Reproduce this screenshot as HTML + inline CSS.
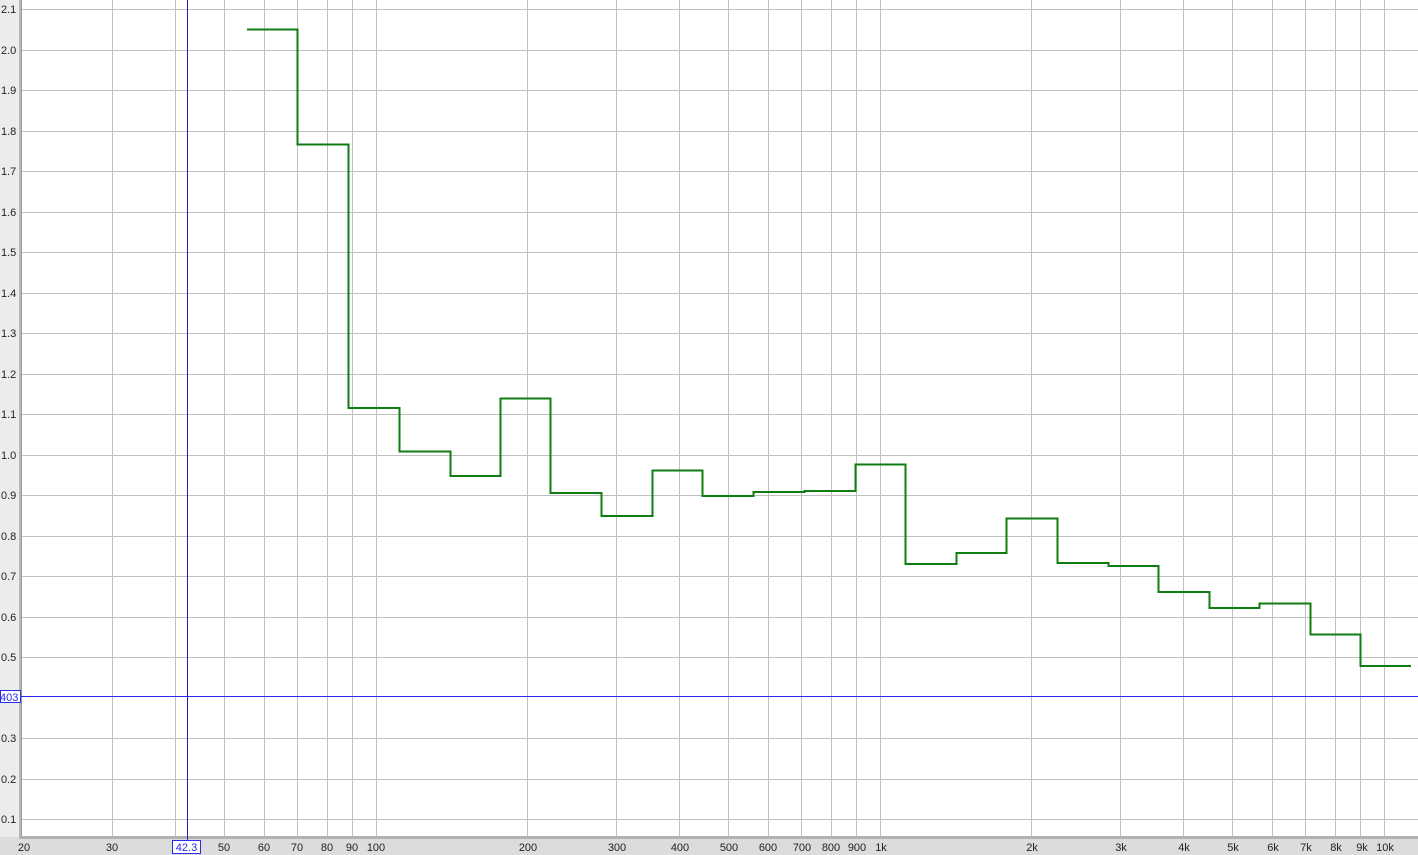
<!DOCTYPE html>
<html><head><style>
html,body{margin:0;padding:0;width:1418px;height:855px;overflow:hidden;background:#fff;font-family:"Liberation Sans",sans-serif;}
svg{display:block}
</style></head><body>
<svg width="1418" height="855" xmlns="http://www.w3.org/2000/svg" font-family="Liberation Sans, sans-serif" font-size="11">
<rect x="0" y="0" width="1418" height="855" fill="#fff"/>
<!-- left panel -->
<rect x="0" y="0" width="21" height="855" fill="#ececec"/>
<rect x="19" y="0" width="3" height="838" fill="#b8b8b8"/>
<rect x="21" y="0" width="1" height="838" fill="#999"/>
<!-- bottom panel -->
<rect x="0" y="837" width="1418" height="18" fill="#dcdcdc"/>
<rect x="19" y="836" width="1399" height="3" fill="#b0b0b0"/>
<g stroke="#c0c0c0" stroke-width="1">
<line x1="22" x2="1418" y1="9.5" y2="9.5"/><line x1="22" x2="1418" y1="50.5" y2="50.5"/><line x1="22" x2="1418" y1="90.5" y2="90.5"/><line x1="22" x2="1418" y1="131.5" y2="131.5"/><line x1="22" x2="1418" y1="171.5" y2="171.5"/><line x1="22" x2="1418" y1="212.5" y2="212.5"/><line x1="22" x2="1418" y1="252.5" y2="252.5"/><line x1="22" x2="1418" y1="293.5" y2="293.5"/><line x1="22" x2="1418" y1="333.5" y2="333.5"/><line x1="22" x2="1418" y1="374.5" y2="374.5"/><line x1="22" x2="1418" y1="414.5" y2="414.5"/><line x1="22" x2="1418" y1="455.5" y2="455.5"/><line x1="22" x2="1418" y1="495.5" y2="495.5"/><line x1="22" x2="1418" y1="536.5" y2="536.5"/><line x1="22" x2="1418" y1="576.5" y2="576.5"/><line x1="22" x2="1418" y1="617.5" y2="617.5"/><line x1="22" x2="1418" y1="657.5" y2="657.5"/><line x1="22" x2="1418" y1="738.5" y2="738.5"/><line x1="22" x2="1418" y1="779.5" y2="779.5"/><line x1="22" x2="1418" y1="819.5" y2="819.5"/>
<line y1="0" y2="836" x1="112.5" x2="112.5"/><line y1="0" y2="836" x1="175.5" x2="175.5"/><line y1="0" y2="836" x1="224.5" x2="224.5"/><line y1="0" y2="836" x1="264.5" x2="264.5"/><line y1="0" y2="836" x1="297.5" x2="297.5"/><line y1="0" y2="836" x1="327.5" x2="327.5"/><line y1="0" y2="836" x1="352.5" x2="352.5"/><line y1="0" y2="836" x1="376.5" x2="376.5"/>
<line y1="0" y2="836" x1="527.5" x2="527.5"/><line y1="0" y2="836" x1="616.5" x2="616.5"/><line y1="0" y2="836" x1="679.5" x2="679.5"/><line y1="0" y2="836" x1="728.5" x2="728.5"/><line y1="0" y2="836" x1="768.5" x2="768.5"/><line y1="0" y2="836" x1="801.5" x2="801.5"/><line y1="0" y2="836" x1="831.5" x2="831.5"/><line y1="0" y2="836" x1="856.5" x2="856.5"/><line y1="0" y2="836" x1="880.5" x2="880.5"/>
<line y1="0" y2="836" x1="1031.5" x2="1031.5"/><line y1="0" y2="836" x1="1120.5" x2="1120.5"/><line y1="0" y2="836" x1="1183.5" x2="1183.5"/><line y1="0" y2="836" x1="1232.5" x2="1232.5"/><line y1="0" y2="836" x1="1272.5" x2="1272.5"/><line y1="0" y2="836" x1="1305.5" x2="1305.5"/><line y1="0" y2="836" x1="1335.5" x2="1335.5"/><line y1="0" y2="836" x1="1360.5" x2="1360.5"/><line y1="0" y2="836" x1="1384.5" x2="1384.5"/>
</g>
<!-- y labels -->
<g fill="#222" font-size="11">
<text x="1" y="13">2.1</text><text x="1" y="54">2.0</text><text x="1" y="94">1.9</text><text x="1" y="135">1.8</text><text x="1" y="175">1.7</text><text x="1" y="216">1.6</text><text x="1" y="256">1.5</text><text x="1" y="297">1.4</text><text x="1" y="337">1.3</text><text x="1" y="378">1.2</text><text x="1" y="418">1.1</text><text x="1" y="459">1.0</text><text x="1" y="499">0.9</text><text x="1" y="540">0.8</text><text x="1" y="580">0.7</text><text x="1" y="621">0.6</text><text x="1" y="661">0.5</text><text x="1" y="742">0.3</text><text x="1" y="783">0.2</text><text x="1" y="823">0.1</text>
</g>
<!-- x labels -->
<g fill="#222" font-size="11" text-anchor="middle">
<text x="24" y="851">20</text><text x="112" y="851">30</text><text x="175" y="851">4</text><text x="224" y="851">50</text><text x="264" y="851">60</text><text x="297" y="851">70</text><text x="327" y="851">80</text><text x="352" y="851">90</text><text x="376" y="851">100</text>
<text x="528" y="851">200</text><text x="617" y="851">300</text><text x="680" y="851">400</text><text x="729" y="851">500</text><text x="768" y="851">600</text><text x="802" y="851">700</text><text x="831" y="851">800</text><text x="857" y="851">900</text><text x="881" y="851">1k</text>
<text x="1032" y="851">2k</text><text x="1121" y="851">3k</text><text x="1184" y="851">4k</text><text x="1233" y="851">5k</text><text x="1273" y="851">6k</text><text x="1306" y="851">7k</text><text x="1336" y="851">8k</text><text x="1362" y="851">9k</text><text x="1385" y="851">10k</text>
</g>
<!-- cursor lines -->
<line x1="0" x2="1418" y1="696.5" y2="696.5" stroke="#2a2af0" stroke-width="1"/>
<line x1="187.5" x2="187.5" y1="0" y2="840" stroke="#2020c0" stroke-width="1"/>
<rect x="0.5" y="690.5" width="20" height="12" fill="#fff" stroke="#2a2af0"/>
<text x="0" y="701" fill="#2a2af0" font-size="11">403</text>
<rect x="172.5" y="840.5" width="28" height="13" fill="#fff" stroke="#2a2af0"/>
<text x="186.5" y="851" fill="#2a2af0" font-size="11" text-anchor="middle">42.3</text>
<!-- data -->
<path fill="none" stroke="#0f7d12" stroke-width="2" d="M247 29.5H297.5V144.5H348.5V408H399.5V451.5H450.5V476H500.5V398.5H550.5V493H601.5V516H652.5V470.5H702.5V496H753.5V492H804.5V491H855.5V464.5H905.5V564H956.5V553H1006.5V518.5H1057.5V563H1108.5V566H1158.5V592H1209.5V608H1259.5V603.5H1310.5V634.5H1360.5V666H1411"/>
</svg>
</body></html>
